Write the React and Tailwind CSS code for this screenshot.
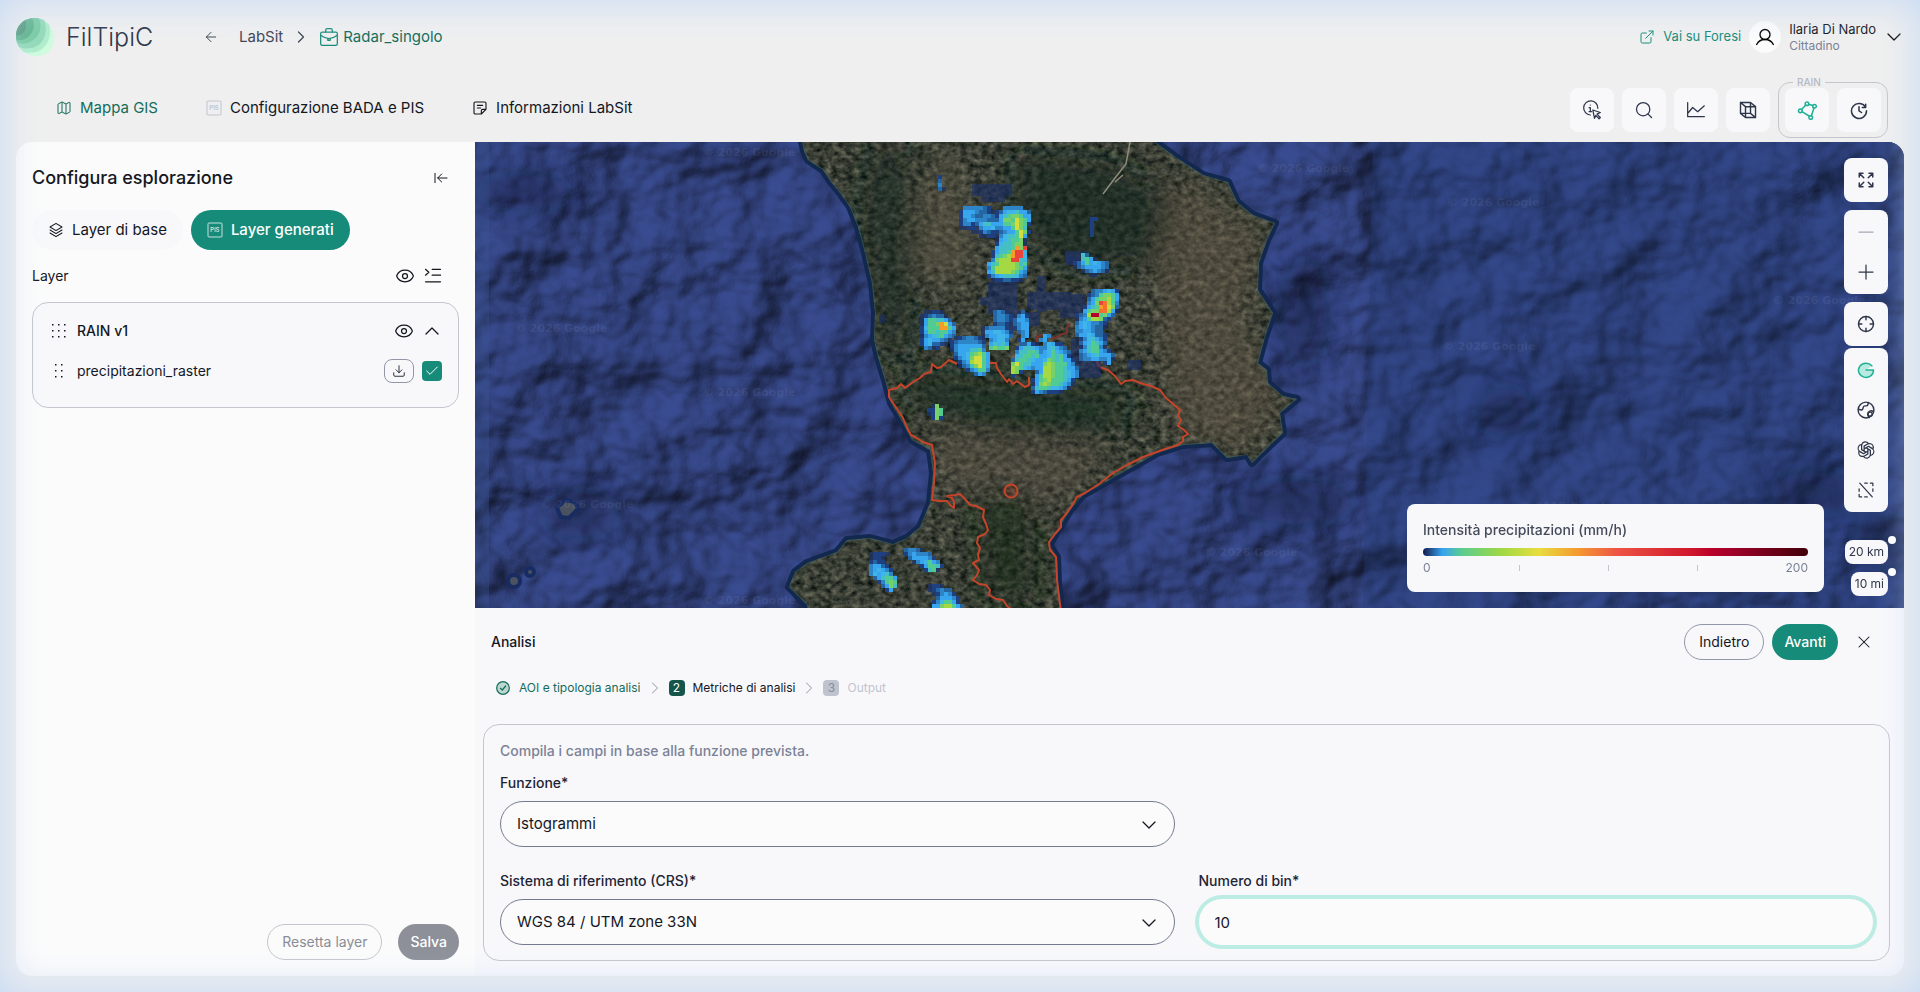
import React, { useState } from 'react'
import {
  ArrowLeft,
  ArrowLeftToLine,
  Check,
  ChevronDown,
  ChevronRight,
  ChevronUp,
  Download,
  ExternalLink,
  Eye,
  Map as MapIcon,
  Minus,
  Plus,
  Search,
  X,
} from 'lucide-react'
import { PiOpenAiLogo, PiSelectionSlash, PiStack } from 'react-icons/pi'

/* ---------- icons ---------- */

const Svg = ({ children, className = 'size-5', width = 1.5 }) => (
  <svg
    viewBox="0 0 24 24"
    className={className}
    fill="none"
    stroke="currentColor"
    strokeWidth={width}
    strokeLinecap="round"
    strokeLinejoin="round"
    aria-hidden="true"
  >
    {children}
  </svg>
)

const Logo = () => (
  <svg viewBox="0 0 38 38" className="h-[38px] w-[38px]" aria-hidden="true">
    <defs>
      <clipPath id="logo-clip">
        <path d="M17 0C29 -1 38 9 38 21C38 32 30 38 21 38C9 38 0 30 0 18C0 8 7 1 17 0Z" />
      </clipPath>
    </defs>
    <g clipPath="url(#logo-clip)">
      <rect width="38" height="38" fill="#cffbdf" />
      <path d="M-2 -2H30C38 12 34 30 20 34C10 36 2 34 -2 30Z" fill="#b0edcb" />
      <path d="M-2 -2H26C33 10 30 24 19 29C10 32 2 30 -2 26Z" fill="#93dab8" />
      <path d="M-2 -2H22C27 8 24 18 16 23C9 27 2 26 -2 23Z" fill="#79caa3" />
      <path d="M-2 -2H15C20 6 18 14 12 19C7 23 2 23 -2 21Z" fill="#5fb48c" />
      <path d="M-2 -2H8C12 6 10 13 6 16C3 18 0 18 -2 17Z" fill="#559a7c" />
    </g>
  </svg>
)

const PisIcon = ({ className }) => (
  <svg viewBox="0 0 16 16" className={className} fill="none" stroke="currentColor" aria-hidden="true">
    <rect x="1" y="1" width="14" height="14" rx="1" />
    <text
      x="8"
      y="10"
      textAnchor="middle"
      fontSize="6"
      fontWeight="600"
      fontFamily="Inter, sans-serif"
      fill="currentColor"
      stroke="none"
    >
      PIS
    </text>
  </svg>
)

const BriefcaseIcon = () => (
  <Svg className="size-5">
    <rect x="2" y="6" width="20" height="16" rx="2" />
    <path d="M8 6V4c0-1 1-2 2-2h4c1 0 2 1 2 2v2M2 10c4 3 7 4 10 4s6-1 10-4M10.500 14h3v2h-3z" />
  </Svg>
)

const NoteIcon = () => (
  <Svg className="size-4" width={1.7}>
    <path d="M5 3h14a2 2 0 0 1 2 2v9l-7 7H5a2 2 0 0 1-2-2V5a2 2 0 0 1 2-2zM14 21v-5a2 2 0 0 1 2-2h5M8 8h8M8 12h5" />
  </Svg>
)

const UserIcon = () => (
  <Svg className="size-5" width={1.6}>
    <circle cx="12" cy="9" r="6" />
    <path d="M2 21c2-4 5-6 10-6s8 2 10 6" />
  </Svg>
)

const InfoCursorIcon = () => (
  <Svg>
    <path d="M10 18a8.500 8.500 0 1 1 9-8M8.500 9H10v5M8.500 14h3M10 6v.1M13 12l9 3-4 2 4 4-1.500 1.500-4-4-1.500 3.500z" />
  </Svg>
)

const ChartIcon = () => (
  <Svg>
    <path d="M2 3v17h20M3 15l5-6 6 5 8-7" />
  </Svg>
)

const CubeIcon = () => (
  <Svg width={1.7}>
    <path d="M3 3h12v13H3zM9 8h12v13H9zM3 3l6 5M15 3l6 5M3 16l6 5M15 16l6 5" />
  </Svg>
)

const PolygonIcon = () => (
  <Svg width={1.8}>
    <circle cx="4" cy="13" r="2.200" />
    <circle cx="12" cy="4.500" r="2.200" />
    <circle cx="21" cy="7.500" r="2.200" />
    <circle cx="16.500" cy="21" r="2.200" />
    <path d="M5.500 11.500l5-5.500M14 5l4.800 1.500M20.300 9.800l-3 9M6 14l9 5.500" />
  </Svg>
)

const HistoryIcon = () => (
  <Svg width={1.8}>
    <path d="M20 5v4h-4M20 9a9 9 0 1 0 1 4M19.500 18v.1M12 8v5l3 2" />
  </Svg>
)

const ExpandIcon = () => (
  <Svg className="size-[18px]" width={2}>
    <path d="M3 8V3h5M3 3l6 6M16 3h5v5M21 3l-6 6M3 16v5h5M3 21l6-6M21 16v5h-5M21 21l-6-6" />
  </Svg>
)

const CrosshairIcon = () => (
  <Svg className="size-5" width={1.7}>
    <circle cx="12" cy="12" r="9" />
    <path d="M12 3v4M12 17v4M3 12h4M17 12h4" />
  </Svg>
)

const GoogleIcon = () => (
  <Svg className="size-5" width={1.8}>
    <path d="M19 7A9 8.500 0 1 0 21 12H12" fill="#b8eadf" />
  </Svg>
)

const EarthIcon = () => (
  <Svg className="size-5" width={1.7}>
    <circle cx="12" cy="12" r="9.500" />
    <path d="M3 11c2 1 4 2 5 0s0-4 3-4 3 0 4-4M21 14c-3-2-7-1-7 3 0 2 1 3 2 4" />
    <circle cx="17" cy="17" r="2.500" />
  </Svg>
)

const ListIcon = () => (
  <Svg className="size-5">
    <path d="M3 4l4 3.500L3 11M11 4h10M11 11h10M3 19h18" />
  </Svg>
)

const Grip = ({ cols }) => (
  <svg viewBox="0 0 16 16" className="size-4" fill="currentColor" aria-hidden="true">
    {cols.map((x) => [2, 8, 14].map((y) => <rect key={`${x}-${y}`} x={x - 1} y={y - 1} width="1.500" height="1.500" />))}
  </svg>
)

/* ---------- map ---------- */

const COAST =
  'M327 -10L327 0L329 9L333 18L348 28L356 40L365 51L375 65L383 85L390 111L397 141L400 171L399 198L403 215L410 238L416 261L428 281L437 298L455 308L458 331L455 361L445 385L432 396L418 402L395 396L372 398L362 410L332 421L320 430L314 445L332 463L335 476L587 476L583 441L582 415L574 403L586 383L595 368L608 353L652 328L682 311L708 303L737 301L752 316L772 313L777 321L790 308L808 291L805 271L822 257L808 254L793 241L792 228L783 221L790 195L798 171L783 148L784 121L792 98L800 81L778 73L762 60L753 40L728 33L702 16L680 0L676 -10Z'

const BORDERS = [
  'M620 216L624 224L627 226L633 228L640 234L646 242L650 239L658 238L668 242L676 244L685 248L691 256L697 261L705 268L703 274L706 278L703 284L709 288L713 292L708 295L708 299L703 303L690 307L668 315L652 323L638 331L624 342L610 351L602 355L598 362L592 371L586 378L586 385L580 392L574 400L575 408L581 415L582 438L586 470',
  'M554 235L554 243L550 245L542 239L538 242L534 237L532 240L526 232L522 226L521 221L513 221L507 225M482 222L474 218L466 225L462 226L457 222L456 230L449 232L445 236L438 240L430 246L426 242L422 246L414 248L414 255L420 264L428 276L432 286L436 293L440 295L448 300L457 303L458 310L460 321L459 340L457 358L464 359L472 359L475 363L479 366L479 360L477 356L472 354L480 353L485 352L490 357L495 363L501 364L509 368L508 375L511 382L513 388L510 392L503 395L502 401L505 406L503 413L504 418L498 421L504 428L502 433L498 438L504 442L511 443L515 448L514 453L521 457L528 458L532 464L537 468',
]

const INNER_BORDER = 'M562 200L562 195L566 193M576 197L583 195L587 192L592 191L592 186L595 181'

// one letter per intensity class, dots are empty cells
const RAIN_COLORS = {
  a: '#1f3368',
  b: '#1f4080',
  c: '#2565a2',
  d: '#2d85c8',
  e: '#38a5ef',
  f: '#3fb5e8',
  g: '#45bfc4',
  h: '#52cb92',
  i: '#78d168',
  j: '#a4d944',
  k: '#d2dc3c',
  o: '#f79b2a',
  p: '#f4702c',
  r: '#e8453c',
  s: '#b8002c',
}

const RAIN_CELLS = [
  {
    x: 484,
    y: 64,
    rows: [
      '.dddddcb...ddddd..',
      'beeedccbabceffgeec',
      'beedccddcbeghiihee',
      'bdeedddccceiihkihe',
      'bddbceggeeehhikihb',
      'aabbadeefddeehkig.',
      '...aabdcbbcdeehkib',
      '.....aabbadfgghke.',
      '.........aefghhia.',
      '.........bfgghiia.',
      '.........eggghoir.',
      '........begghorrf.',
      '........bghijorrf.',
      '........dijjjrrgf.',
      '.......eghjjjjigh.',
      '.......dhjjjjjihe.',
      '.......egjjjjihed.',
      '.......bdefgggfdc.',
      '........abbccbba..',
    ],
  },
  {
    x: 590,
    y: 111,
    rows: ['a...gc.....', 'aaa.ghea...', 'aabcehefedc', '..acdeeeedc', '....acdedca', '......aa...'],
  },
  {
    x: 596,
    y: 147,
    rows: [
      '.....cddefeb',
      '....bcdhiihe',
      '....cehiijhe',
      '....deirpjhd',
      '...beghopkic',
      '...ehiippjea',
      '.bcdjsshiec.',
      '.adehjjicb..',
      '.cefeddcb...',
      '.defedcca...',
      '.ddeedcc....',
      '.ceefeccb...',
      '..bdfgedb...',
      '..cefhgec...',
      '..adghhda...',
      '..deghhedb..',
      '..cdefgeeec.',
      '..cddeeddea.',
      '........be..',
    ],
  },
  {
    x: 445,
    y: 168,
    rows: [
      '.aabba..',
      'abcdcca.',
      'aehhggec',
      'aehhiokec',
      'bfhhhoohe',
      'behhghhed',
      'adefghedc',
      'befeedca',
      'befccba.',
      '.dcab...',
    ],
  },
  {
    x: 475,
    y: 194,
    rows: [
      '.abcddcba..',
      'bcdddddcb..',
      'bdeeeeeec..',
      'adeeegghd..',
      '.ceefhijhe.',
      '.bdefikkhe.',
      '..bdejkkhe.',
      '..acdgikhe.',
      '....bdehhd.',
      '......ced..',
    ],
  },
  {
    x: 506,
    y: 168,
    rows: [
      '...cdca..ac.',
      '...cddcbadeb',
      '...cddcbceed',
      '...bccbacdee',
      'acddddbabdee',
      'aeeffedb.cde',
      'adeeffec..de',
      '..deffd..be.',
      '..egfge.....',
      '..hihhi.....',
    ],
  },
  {
    x: 536,
    y: 192,
    rows: [
      '........ed....',
      '.......de.....',
      '..cceba.dfebb.',
      '.beggfeddfgedc..',
      '.dgghhgdefhfedc.',
      '.fghhgheefhgheb.',
      'cghhgfeefihgheeb',
      'ikhggeeeijihhhed',
      'jihfedeejjihhgeec',
      'jib...cejjihhgfed',
      'b.....ehjjihhgfed',
      '.....behijhhhgeb',
      '.....aeijihhgeda',
      '.....cghhgffeda.',
      '.....bedcbbba...',
    ],
  },
  { x: 452, y: 262, rows: ['.ai.', 'bbih', 'abih', '.bib'] },
  {
    x: 394,
    y: 410,
    rows: ['abbba.', 'abba..', 'bcbb..', 'deecb.', 'defedb.', 'dfefgd.', '.ceghhe', '..bdhih', '...ceig', '....be.'],
  },
  { x: 429, y: 406, rows: ['cddca...', 'bdedddc..', '.ceeeedb', '..adefhed', '....behhgb', '.....bgha.'] },
  { x: 453, y: 442, rows: ['abba....', 'abcdcc..', '.abdedb.', '..ceeedb', '.bdfhheb', '.eeijjhec', 'behjjkihe'] },
  { x: 463, y: 33, rows: ['b...', 'c...', 'd...', 'ca..'] },
  { x: 615, y: 75, rows: ['bb', 'b.', 'b.', 'b.', 'b.'] },
]

const HAZE = [
  [497, 42, 40, 12],
  [506, 50, 24, 10],
  [513, 140, 30, 32],
  [531, 134, 12, 34],
  [505, 155, 34, 8],
  [552, 150, 44, 18],
  [562, 134, 9, 36],
  [585, 152, 26, 24],
  [545, 170, 20, 14],
  [576, 212, 50, 24],
  [596, 196, 14, 22],
  [652, 218, 14, 10],
  [404, 173, 6, 8],
  [590, 109, 22, 10],
]

const WATERMARKS = [
  [228, 14],
  [40, 190],
  [228, 254],
  [66, 366],
  [228, 462],
  [782, 30],
  [730, 414],
  [972, 64],
  [968, 208],
  [1298, 162],
  [1045, 368],
]

const SatelliteMap = () => (
  <svg
    viewBox="0 0 1429 466"
    preserveAspectRatio="xMidYMid slice"
    className="absolute inset-0 size-full bg-[#2c3c75]"
    role="img"
    aria-label="Mappa satellitare con precipitazioni"
  >
    <defs>
      <filter id="sea" x="0" y="0" width="100%" height="100%" colorInterpolationFilters="sRGB">
        <feTurbulence type="fractalNoise" baseFrequency="0.010 0.012" numOctaves="4" seed="23" />
        <feColorMatrix values="0 0 0 0 0  0 0 0 0 0  0 0 0 0 0  1 0 0 0 0" />
        <feGaussianBlur stdDeviation="1.200" />
        <feDiffuseLighting surfaceScale="20" diffuseConstant="1.150" lightingColor="#32427e">
          <feDistantLight azimuth="215" elevation="58" />
        </feDiffuseLighting>
      </filter>
      <filter id="terrain" x="0" y="0" width="100%" height="100%" colorInterpolationFilters="sRGB">
        <feTurbulence type="fractalNoise" baseFrequency="0.140 0.180" numOctaves="5" seed="8" />
        <feColorMatrix values="0.500 0.200 0 0 -0.120  0.450 0.200 0 0 -0.075  0.400 0.150 0 0 -0.065  0 0 0 0 1" />
      </filter>
      <filter id="soft" x="-30%" y="-30%" width="160%" height="160%">
        <feGaussianBlur stdDeviation="14" />
      </filter>
      <clipPath id="land">
        <path d={COAST} />
      </clipPath>
    </defs>

    <rect x="-20" y="-20" width="1469" height="506" filter="url(#sea)" />
    <rect width="14" height="466" fill="#3c5796" opacity="0.350" />
    <path d="M898 0H1429V466H888Z" fill="#24407c" opacity="0.300" />
    <g fill="#0d1330" filter="url(#soft)" opacity="0.450">
      <ellipse cx="50" cy="50" rx="50" ry="16" />
      <ellipse cx="105" cy="372" rx="36" ry="22" />
      <ellipse cx="830" cy="170" rx="20" ry="55" />
      <ellipse cx="820" cy="360" rx="60" ry="20" />
      <ellipse cx="1030" cy="270" rx="26" ry="24" />
      <ellipse cx="1340" cy="350" rx="50" ry="18" />
      <ellipse cx="1410" cy="400" rx="30" ry="24" />
    </g>

    <path d={COAST} fill="none" stroke="#12284f" strokeWidth="8" strokeLinejoin="round" />
    <g clipPath="url(#land)">
      <rect x="300" y="-10" width="540" height="486" filter="url(#terrain)" />
      <g filter="url(#soft)">
        <path d="M400 0L430 0L440 120L430 230L400 200L385 60Z" fill="#13271f" opacity="0.550" />
        <path d="M540 10L640 20L700 60L680 120L600 130L540 90Z" fill="#10241c" opacity="0.600" />
        <path d="M440 230L560 240L660 250L640 290L520 290L430 260Z" fill="#10281a" opacity="0.650" />
        <path d="M500 350L560 360L560 460L510 460Z" fill="#10281a" opacity="0.550" />
        <path d="M450 40L480 0L500 120L470 150L440 120Z" fill="#655d4c" opacity="0.500" />
        <path d="M700 30L790 90L770 180L810 260L770 310L700 290L680 150Z" fill="#6b5a4c" opacity="0.450" />
        <path d="M450 290L540 300L640 310L570 370L560 340L470 345Z" fill="#6b5c4e" opacity="0.450" />
      </g>
      <path d="M655 -10L655 0L651 22L640 36L628 52M648 33L640 40" fill="none" stroke="#8f8b7c" strokeWidth="1.500" />
      <path d={COAST} fill="none" stroke="#3a5a5c" strokeWidth="2" opacity="0.700" />
    </g>

    <g fill="#4a5160" stroke="#182c62" strokeWidth="4">
      <path d="M82 366L90 358L100 360L103 367L94 376L86 375Z" />
      <circle cx="39" cy="439" r="6" />
      <circle cx="55" cy="430" r="4" />
    </g>

    <g fill="#ffffff" opacity="0.060" fontFamily="DejaVu Sans, sans-serif" fontSize="11" fontWeight="700">
      {WATERMARKS.map(([x, y]) => (
        <text key={`${x}-${y}`} x={x} y={y}>
          © 2026 Google
        </text>
      ))}
    </g>

    <g fill="none" stroke="#c4452b" strokeWidth="2" strokeLinejoin="round">
      {BORDERS.map((d) => (
        <path key={d} d={d} />
      ))}
      <path d={INNER_BORDER} stroke="#7d322f" />
      <circle cx="536" cy="349" r="6.500" fill="#c4452b" fillOpacity="0.200" />
    </g>

    <g fill="#1c2f6b" opacity="0.600">
      {HAZE.map(([x, y, w, h]) => (
        <rect key={`${x}-${y}`} x={x} y={y} width={w} height={h} />
      ))}
    </g>
    <g shapeRendering="crispEdges">
      {RAIN_CELLS.map((patch) =>
        patch.rows.map((row, r) =>
          row.split('').map((code, c) =>
            code === '.' ? null : (
              <rect
                key={`${patch.x}-${r}-${c}`}
                x={patch.x + c * 4}
                y={patch.y + r * 4}
                width="4"
                height="4"
                fill={RAIN_COLORS[code]}
                opacity={code === 'a' ? 0.75 : 1}
              />
            )
          )
        )
      )}
    </g>
  </svg>
)

const MapButton = ({ label, children, className = 'h-10' }) => (
  <button type="button" aria-label={label} className={`flex w-11 items-center justify-center ${className}`}>
    {children}
  </button>
)

const ScaleTag = ({ children }) => (
  <div className="relative flex h-6 items-center rounded-lg bg-[#f8f8fb] px-1 text-xs text-[#2d3548]">
    {children}
    <span className="absolute -top-1 -right-2 size-2 rounded-full bg-white" />
  </div>
)

const MapPanel = () => (
  <section className="relative min-h-[360px] flex-1 overflow-hidden">
    <SatelliteMap />

    <div className="absolute top-4 right-4 flex flex-col items-end text-[#2d3548]">
      <div className="mb-2 rounded-lg bg-[#f8f8fb]">
        <MapButton label="Schermo intero" className="h-11">
          <ExpandIcon />
        </MapButton>
      </div>
      <div className="mb-2 rounded-lg bg-[#f8f8fb] py-0.5">
        <MapButton label="Riduci">
          <Minus className="size-6 text-[#a5a8b3]" strokeWidth={1.25} />
        </MapButton>
        <MapButton label="Ingrandisci">
          <Plus className="size-6" strokeWidth={1.25} />
        </MapButton>
      </div>
      <div className="mb-0.5 rounded-lg bg-[#f8f8fb]">
        <MapButton label="Centra" className="h-11">
          <CrosshairIcon />
        </MapButton>
      </div>
      <div className="rounded-lg bg-[#f8f8fb] py-0.5">
        <MapButton label="Google">
          <span className="text-[#1fb195]">
            <GoogleIcon />
          </span>
        </MapButton>
        <MapButton label="Terreno">
          <EarthIcon />
        </MapButton>
        <MapButton label="Assistente">
          <PiOpenAiLogo className="size-5" />
        </MapButton>
        <MapButton label="Nessuno sfondo">
          <PiSelectionSlash className="size-5" />
        </MapButton>
      </div>
    </div>

    <div className="absolute right-4 bottom-3 flex flex-col items-end gap-2">
      <ScaleTag>20 km</ScaleTag>
      <ScaleTag>10 mi</ScaleTag>
    </div>

    <div className="absolute right-20 bottom-4 w-[417px] rounded-lg bg-[#f8f8fb] p-4">
      <p className="text-sm leading-5 font-medium text-[#434a5a]">Intensità precipitazioni (mm/h)</p>
      <div className="mt-2 h-2 rounded-full bg-[linear-gradient(90deg,#141a4d,#36a3f0_5%,#5bcc90_10%,#9dd846_20%,#e8dd3f_30%,#f49b30_40%,#ee5645_50%,#cf152b_70%,#b80029_75%,#a1002a_80%,#400009)]" />
      <div className="mt-1 flex items-center justify-between text-xs leading-4 text-[#7b8296]">
        <span>0</span>
        <span className="h-1.5 w-px bg-[#c4c6ce]" />
        <span className="h-1.5 w-px bg-[#c4c6ce]" />
        <span className="h-1.5 w-px bg-[#c4c6ce]" />
        <span>200</span>
      </div>
    </div>
  </section>
)

/* ---------- header ---------- */

const Header = () => (
  <header className="flex items-center justify-between pt-[17px] pb-[21px]">
    <div className="flex items-center">
      <Logo />
      <span className="ml-3 w-[137px] text-[25px] leading-10 font-light text-[#2d3548]">FilTipiC</span>
      <nav className="flex items-center text-[15px] text-[#3f4656]">
        <button type="button" aria-label="Indietro" className="mr-5">
          <ArrowLeft className="size-4" strokeWidth={1.5} />
        </button>
        <a href="#labsit">LabSit</a>
        <ChevronRight className="mx-2 size-5" strokeWidth={1.5} />
        <a href="#radar" className="flex items-center gap-1 text-[#146c5b]">
          <span className="text-[#178b79]">
            <BriefcaseIcon />
          </span>
          Radar_singolo
        </a>
      </nav>
    </div>
    <div className="flex items-center">
      <a href="#foresi" className="mr-2 flex items-center gap-2 text-[13px] text-[#178b79]">
        <ExternalLink className="size-4" strokeWidth={1.5} />
        Vai su Foresi
      </a>
      <button type="button" className="flex items-center text-left">
        <span className="mr-2 flex size-8 items-center justify-center rounded-full bg-[#fbfbfb]">
          <UserIcon />
        </span>
        <span className="mr-1.5 flex flex-col">
          <span className="text-[13px] leading-[18px] text-[#14171f]">Ilaria Di Nardo</span>
          <span className="text-xs leading-4 text-[#7b8296]">Cittadino</span>
        </span>
        <ChevronDown className="-mr-0.5 size-6" strokeWidth={1.25} />
      </button>
    </div>
  </header>
)

const ToolButton = ({ label, children, active }) => (
  <button
    type="button"
    aria-label={label}
    className={`flex size-11 items-center justify-center rounded-lg bg-[#f8f8fb] ${
      active ? 'text-[#1fb195]' : 'text-[#2d3548]'
    }`}
  >
    {children}
  </button>
)

const Toolbar = () => (
  <div className="flex items-end justify-between pb-1">
    <nav className="mb-[18px] ml-10 flex gap-12 text-[15px] leading-6 text-[#14171f]">
      <a href="#mappa" className="flex items-center gap-2 text-[#146c5b]">
        <MapIcon className="size-4" strokeWidth={1.5} />
        Mappa GIS
      </a>
      <a href="#config" className="flex items-center gap-2">
        <PisIcon className="size-4 text-[#c0c4d0]" />
        Configurazione BADA e PIS
      </a>
      <a href="#info" className="flex items-center gap-2">
        <NoteIcon />
        Informazioni LabSit
      </a>
    </nav>
    <div className="mr-4 flex items-end gap-2">
      <div className="mb-1.5 flex gap-2">
        <ToolButton label="Informazioni">
          <InfoCursorIcon />
        </ToolButton>
        <ToolButton label="Cerca">
          <Search className="size-5" strokeWidth={1.5} />
        </ToolButton>
        <ToolButton label="Grafici">
          <ChartIcon />
        </ToolButton>
        <ToolButton label="Vista 3D">
          <CubeIcon />
        </ToolButton>
      </div>
      <fieldset className="flex gap-2 rounded-xl border border-[#c4c6ce] px-1.5 pt-0.5 pb-[5px]">
        <legend className="ml-2 h-2 px-1 text-[10px] leading-2 font-medium text-[#b5b9c6]">RAIN</legend>
        <ToolButton label="Disegna area" active>
          <PolygonIcon />
        </ToolButton>
        <ToolButton label="Storico">
          <HistoryIcon />
        </ToolButton>
      </fieldset>
    </div>
  </div>
)

/* ---------- sidebar ---------- */

const Sidebar = () => {
  const [visible, setVisible] = useState(true)

  return (
    <aside className="flex w-[459px] shrink-0 flex-col bg-[#fbfbfb] p-4 text-[#14171f]">
      <div className="mt-1 flex items-center justify-between pr-2.5">
        <h1 className="text-lg leading-8 font-medium">Configura esplorazione</h1>
        <button type="button" aria-label="Chiudi pannello">
          <ArrowLeftToLine className="size-4" strokeWidth={1.5} />
        </button>
      </div>

      <div className="mt-4 flex gap-2 text-[15px]">
        <button type="button" className="flex h-10 items-center gap-2 rounded-full bg-[#f8f8fb] px-4">
          <PiStack className="size-4" />
          Layer di base
        </button>
        <button
          type="button"
          className="flex h-10 items-center gap-2 rounded-full bg-[#178b79] px-4 font-medium text-white"
        >
          <PisIcon className="size-4 opacity-75" />
          Layer generati
        </button>
      </div>

      <div className="mt-4 flex items-center justify-between pr-4 text-sm leading-5">
        <span>Layer</span>
        <div className="flex gap-2">
          <button type="button" aria-label="Mostra tutti">
            <Eye className="size-5" strokeWidth={1.5} />
          </button>
          <button type="button" aria-label="Comprimi elenco">
            <ListIcon />
          </button>
        </div>
      </div>

      <div className="mt-4 rounded-2xl border border-[#c4c6ce] bg-[#f8f8fb] px-4 pt-2 pb-5 text-sm">
        <div className="flex h-10 items-center">
          <span className="ml-0.5">
            <Grip cols={[2, 8, 14]} />
          </span>
          <span className="ml-2.5 flex-1 font-medium">RAIN v1</span>
          <button type="button" aria-label="Mostra RAIN v1" className="mr-1.5">
            <Eye className="size-5" strokeWidth={1.5} />
          </button>
          <button type="button" aria-label="Comprimi RAIN v1" className="-mr-0.5">
            <ChevronUp className="size-6" strokeWidth={1.25} />
          </button>
        </div>
        <div className="flex h-9 items-center pt-1">
          <span className="ml-0.5">
            <Grip cols={[5, 11]} />
          </span>
          <label htmlFor="raster" className="ml-2.5 flex-1">
            precipitazioni_raster
          </label>
          <button
            type="button"
            aria-label="Scarica"
            className="mr-2 flex h-6 w-[30px] items-center justify-center rounded-lg border border-[#9297a8]"
          >
            <Download className="size-3.5" strokeWidth={1.5} />
          </button>
          <span className="grid">
            <input
              id="raster"
              type="checkbox"
              checked={visible}
              onChange={(e) => setVisible(e.target.checked)}
              className="col-start-1 row-start-1 size-5 appearance-none rounded checked:bg-[#178b79]"
            />
            <Check
              className="pointer-events-none col-start-1 row-start-1 m-auto size-4 text-white"
              strokeWidth={1.5}
            />
          </span>
        </div>
      </div>

      <div className="mt-auto flex justify-end gap-4 text-sm">
        <button type="button" className="h-9 rounded-full border border-[#c4c6ce] px-3.5 text-[#8a8d96]">
          Resetta layer
        </button>
        <button type="button" className="h-9 rounded-full bg-[#8d9099] px-3 font-medium text-white">
          Salva
        </button>
      </div>
    </aside>
  )
}

/* ---------- analysis ---------- */

const SelectField = ({ id, label, value }) => (
  <div className="flex flex-col gap-2">
    <label htmlFor={id} className="text-sm leading-5 font-medium text-[#1e2433]">
      {label}
    </label>
    <div className="relative">
      <select
        id={id}
        defaultValue={value}
        className="h-[46px] w-full appearance-none rounded-full border border-[#747b90] bg-[#fbfbfb] px-4 text-[15px] text-[#14171f]"
      >
        <option>{value}</option>
      </select>
      <ChevronDown className="pointer-events-none absolute top-3 right-3.5 size-6" strokeWidth={1.25} />
    </div>
  </div>
)

const Steps = () => (
  <ol className="flex items-center text-xs leading-5">
    <li className="flex items-center text-[#146c5b]">
      <span className="mr-2 flex size-4 items-center justify-center">
        <Svg className="size-4" width={1.8}>
          <circle cx="12" cy="12" r="9.500" fill="#bcd6d0" />
          <path d="M8 12.500l3 2.500 5-6" />
        </Svg>
      </span>
      AOI e tipologia analisi
      <ChevronRight className="mx-1 size-5 text-[#a5a8b3]" strokeWidth={1.25} />
    </li>
    <li className="flex items-center text-[#14171f]">
      <span className="mr-2 flex size-4 items-center justify-center rounded-sm bg-[#15554a] text-xs text-white">2</span>
      Metriche di analisi
      <ChevronRight className="mx-1 size-5 text-[#a5a8b3]" strokeWidth={1.25} />
    </li>
    <li className="flex items-center text-[#c0c4d0]">
      <span className="mr-2 flex size-4 items-center justify-center rounded-sm bg-[#bfc3cf] text-xs text-[#868c9e]">
        3
      </span>
      Output
    </li>
  </ol>
)

const Analysis = () => {
  const [bins, setBins] = useState('10')

  return (
    <section className="bg-[#f8f8fb] pt-4 pr-3.5 pb-[15px] pl-2 text-[#14171f]">
      <div className="flex items-center pl-2 text-sm">
        <h2 className="flex-1 font-medium">Analisi</h2>
        <button type="button" className="mr-2 h-9 rounded-full border border-[#9297a8] px-3.5">
          Indietro
        </button>
        <button type="button" className="mr-4 h-9 rounded-full bg-[#178b79] px-3 font-medium text-white">
          Avanti
        </button>
        <button type="button" aria-label="Chiudi" className="mr-4">
          <X className="size-5" strokeWidth={1.25} />
        </button>
      </div>

      <div className="mt-[18px] pl-3">
        <Steps />
      </div>

      <form className="mt-[26px] rounded-2xl border border-[#c4c6ce] p-4 pb-[15px]">
        <p className="mb-3 text-sm leading-5 font-medium text-[#7b8296]">
          Compila i campi in base alla funzione prevista.
        </p>
        <div className="grid grid-cols-2 gap-6">
          <SelectField id="funzione" label="Funzione*" value="Istogrammi" />
          <span />
          <SelectField id="crs" label="Sistema di riferimento (CRS)*" value="WGS 84 / UTM zone 33N" />
          <div className="flex flex-col gap-2">
            <label htmlFor="bin" className="text-sm leading-5 font-medium text-[#1e2433]">
              Numero di bin*
            </label>
            <input
              id="bin"
              type="text"
              value={bins}
              onChange={(e) => setBins(e.target.value)}
              className="h-[46px] w-full rounded-full bg-[#fbfbfb] px-4 text-[15px] ring-4 ring-[#bcece3] outline-none"
            />
          </div>
        </div>
      </form>
    </section>
  )
}

const App = () => (
  <div className="relative flex min-h-screen flex-col bg-[#efefef] px-4 pb-4 font-[Inter,sans-serif]">
    <Header />
    <Toolbar />
    <main className="flex flex-1 overflow-hidden rounded-2xl">
      <Sidebar />
      <div className="flex min-w-0 flex-1 flex-col">
        <MapPanel />
        <Analysis />
      </div>
    </main>
    {/* soft blue glow around the window edge */}
    <div className="pointer-events-none absolute inset-0 shadow-[inset_0_0_40px_#c5d9f5]" />
  </div>
)

export default App
